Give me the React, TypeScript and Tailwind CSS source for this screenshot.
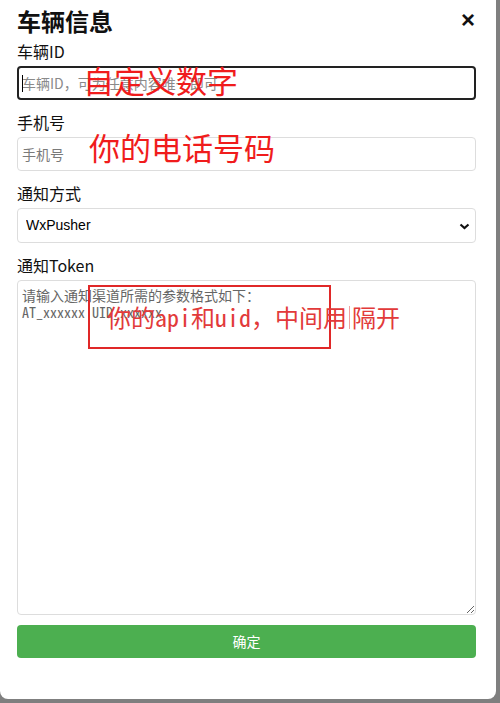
import React from "react";

const fields = "w-full rounded border border-[#dddddd] bg-white text-[14px] text-black outline-none";

export default function App() {
  return (
    <div className="w-[500px] h-[703px] bg-[#7f7f7f] overflow-hidden">
      <div
        className="relative w-[496px] h-[699px] bg-white rounded-b-lg pl-[17px] pr-[20px] pt-[6px] text-[#111]"
        style={{ fontFamily: '"Noto Sans CJK SC", "Liberation Sans", sans-serif' }}
      >
        <div className="flex items-start justify-between h-[30px]">
          <h2 className="text-[24px] font-bold leading-[30px]">车辆信息</h2>
          <button
            className="text-[24px] font-bold leading-none mt-[2px] mr-[1px]"
            style={{ fontFamily: '"Liberation Sans", sans-serif' }}
          >
            ×
          </button>
        </div>

        <div className="mt-[3px] flex flex-col gap-[10px]">
          <div>
            <label className="block h-[24px] text-[16px] leading-[24px]">车辆ID</label>
            <div className="relative mt-[3px]">
              <input
                className="w-full h-[34px] rounded border-2 border-[#222] bg-white pl-[3px] text-[14px] outline-none placeholder:text-[#8a8a8a]"
                placeholder="车辆ID，可为任意内容唯一即可"
              />
              <span className="absolute left-[5px] top-[9px] h-[17px] w-px bg-black" />
            </div>
          </div>

          <div>
            <label className="block h-[24px] text-[16px] leading-[24px]">手机号</label>
            <input
              className={`${fields} mt-[3px] h-[34px] pl-[4px] placeholder:text-[#7a7a7a]`}
              placeholder="手机号"
            />
          </div>

          <div>
            <label className="block h-[24px] text-[16px] leading-[24px]">通知方式</label>
            <div className="relative mt-[3px]">
              <select
                className={`${fields} h-[35px] appearance-none pl-[8px]`}
                style={{ fontFamily: '"Liberation Sans", sans-serif' }}
                defaultValue="WxPusher"
              >
                <option>WxPusher</option>
              </select>
              <svg
                className="absolute right-[6px] top-[15px] pointer-events-none"
                width="11"
                height="7"
                viewBox="0 0 11 7"
              >
                <path d="M1.5 1.5 L5.5 5 L9.5 1.5" fill="none" stroke="#111" strokeWidth="2.2" />
              </svg>
            </div>
          </div>

          <div>
            <label className="block h-[24px] text-[16px] leading-[24px]">通知Token</label>
            <textarea
              className={`${fields} mt-[3px] h-[335px] block pl-[4px] pt-[6px] text-[13.5px] leading-[17px] placeholder:text-[#666]`}
              style={{ fontFamily: '"Noto Sans Mono CJK SC", "Liberation Mono", "Noto Sans CJK SC", monospace' }}
              placeholder={"请输入通知渠道所需的参数格式如下：\nAT_xxxxxx UID_xxxxxx"}
            />
          </div>
        </div>

        <button className="mt-[10px] w-full h-[33px] rounded bg-[#4caf50] text-white text-[14px]">
          确定
        </button>

        {/* red annotations drawn over the form */}
        <span className="absolute left-[83px] top-[64px] text-[31px] leading-none text-[#f01c1c]">
          自定义数字
        </span>
        <span className="absolute left-[89px] top-[131px] text-[31px] leading-none text-[#f01c1c]">
          你的电话号码
        </span>
        <div className="absolute left-[88px] top-[285px] w-[243px] h-[64px] border-2 border-[#e02828]" />
        <span
          className="absolute left-[107px] top-[305px] flex items-center text-[24px] leading-none text-[#e23a3a]"
          style={{ fontFamily: '"Noto Sans Mono CJK SC", "Liberation Mono", "Noto Sans CJK SC", monospace' }}
        >
          你的api和uid，中间用
          <span className="mx-[2px] inline-block h-[23px] w-px bg-[#f0a0a0]" />
          隔开
        </span>
      </div>
    </div>
  );
}
